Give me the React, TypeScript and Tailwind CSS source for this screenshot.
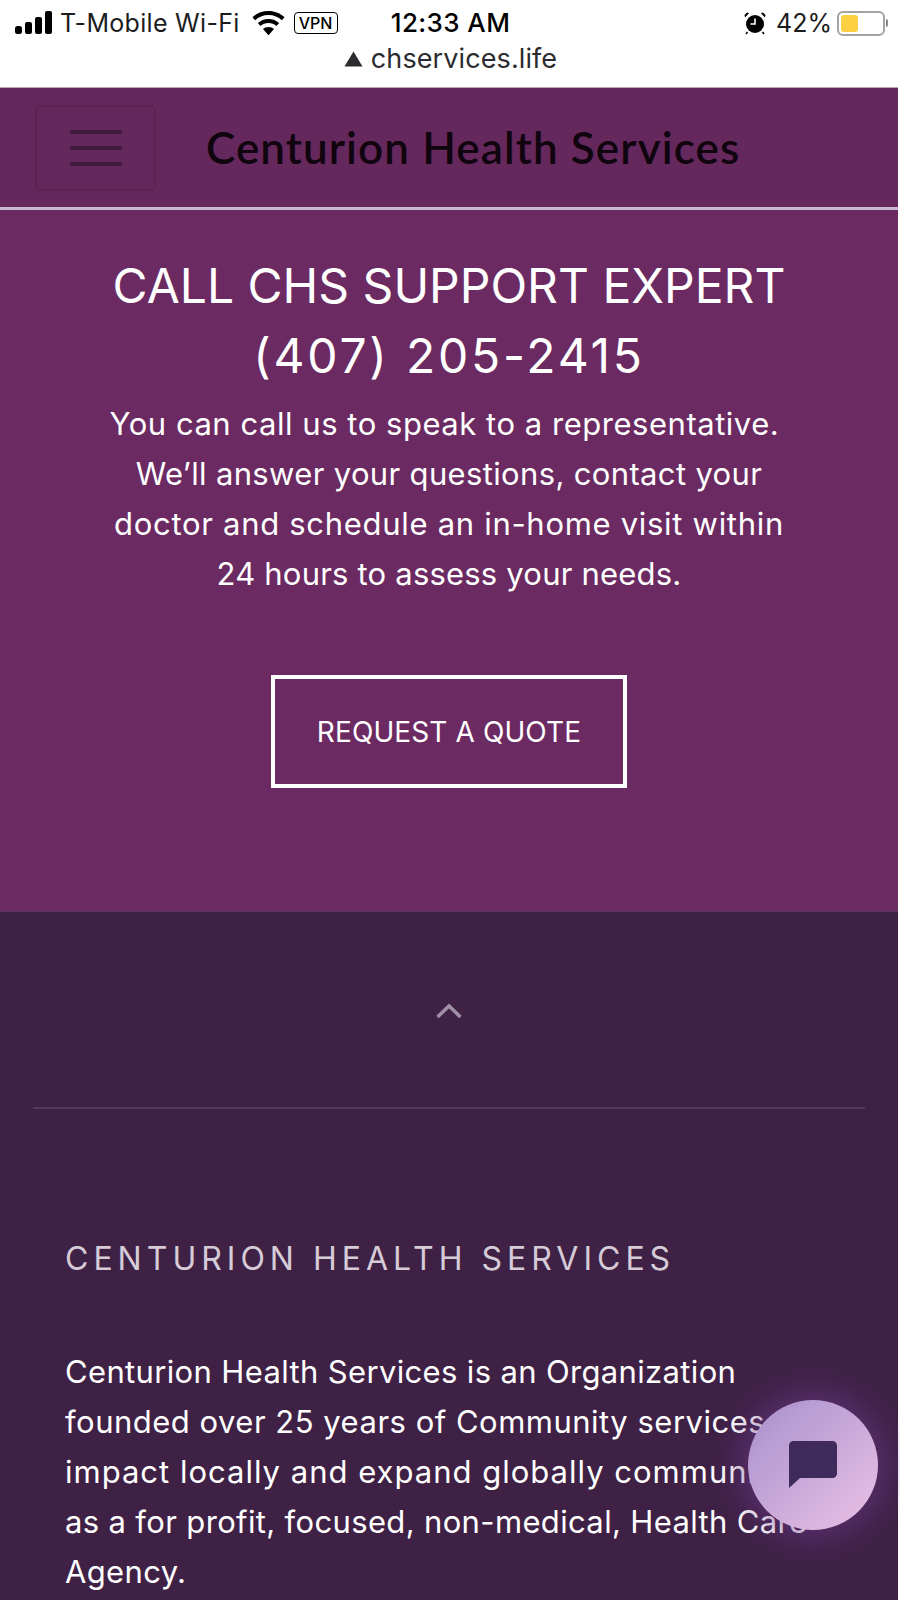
import React from 'react';

const bodyFont = { fontFamily: 'Inter, "Liberation Sans", sans-serif' };

const SignalBars: React.FC = () => (
  <svg width="37" height="24" viewBox="0 0 37 24" className="fill-black">
    <rect x="0" y="15" width="7" height="8" rx="2.5" />
    <rect x="10" y="11" width="7" height="12" rx="2" />
    <rect x="20" y="6" width="7" height="17" rx="2" />
    <rect x="30" y="0" width="7" height="23" rx="2" />
  </svg>
);

const WifiIcon: React.FC = () => (
  <svg width="33" height="25" viewBox="0 0 33 25" className="fill-black">
    <path d="M16.5 0C10 0 4.6 2.4 0.5 6.2l2.6 3C6.6 6 11.2 4 16.5 4s9.9 2 13.4 5.2l2.6-3C28.4 2.4 23 0 16.5 0z" />
    <path d="M16.5 8c-4.2 0-7.9 1.6-10.7 4.1l2.7 3c2.1-1.9 4.9-3 8-3s5.900 1.100 8 3l2.700-3C24.400 9.600 20.700 8 16.500 8z" />
    <path d="M16.500 16c-2.200 0-4.100.8-5.500 2.100l5.500 6.200 5.500-6.200C20.600 16.800 18.700 16 16.500 16z" />
  </svg>
);

const AlarmIcon: React.FC = () => (
  <svg width="22" height="24" viewBox="0 0 22 24">
    <circle cx="11" cy="13" r="9" className="fill-black" />
    <path d="M1 6.500 5 2.200 3 1.500 0.500 4z M21 6.500 17 2.200 19 1.500 21.500 4z" className="fill-black" />
    <path d="M3.500 21 2 23 M18.500 21 20 23" stroke="black" strokeWidth="1.500" />
    <path d="M11 7.500V13H6.500" stroke="white" strokeWidth="1.600" fill="none" />
  </svg>
);

const BatteryIcon: React.FC = () => (
  <div className="flex items-center gap-[1px]">
    <div className="w-[48px] h-[25px] rounded-[6px] border-2 border-[#a3a3a3] p-[2px]">
      <div className="h-full w-[17px] rounded-[3px] bg-[#fbd042]" />
    </div>
    <div className="w-[2px] h-[8px] rounded-r-sm bg-[#8a8a8a]" />
  </div>
);

const StatusBar: React.FC = () => (
  <div className="h-[87px] w-[898px] shrink-0 bg-white pt-[10px] text-black" style={bodyFont}>
    <div className="grid grid-cols-[1fr_auto_1fr] items-center h-[26px] pl-[15px] pr-[9px]">
      <div className="flex items-center">
        <SignalBars />
        <span className="ml-[8px] text-[25px] leading-none tracking-[0.3px] text-[#1c1c1e]">T-Mobile Wi-Fi</span>
        <span className="ml-[12px]"><WifiIcon /></span>
        <span className="ml-[9px] flex h-[22px] w-[44px] items-center justify-center rounded-[4px] border-[1.5px] border-black text-[16px] font-medium leading-none">VPN</span>
      </div>
      <span className="mr-[3px] text-[26px] font-medium leading-none tracking-[0.4px]">12:33 AM</span>
      <div className="flex items-center justify-end">
        <AlarmIcon />
        <span className="ml-[10px] text-[25px] leading-none text-[#1c1c1e]">42%</span>
        <span className="ml-[5px] mr-[1px]"><BatteryIcon /></span>
      </div>
    </div>
    <div className="mt-[9px] flex items-center justify-center gap-[8px] pl-[3px] text-[#2c2c30]">
      <svg width="19" height="16" viewBox="0 0 19 16" className="fill-[#2c2c30]">
        <path d="M9.500 0.500 18.500 15.500H0.500z" />
      </svg>
      <span className="text-[27px] leading-none tracking-[0.1px]">chservices.life</span>
    </div>
  </div>
);

const Navbar: React.FC = () => (
  <div className="flex h-[120px] items-center bg-[#64285c] pl-[35px] border-t border-[#b9a6b6]">
    <div className="flex h-[86px] w-[121px] flex-col items-center justify-center gap-[12px] rounded-[6px] border-2 border-[#5a2353]">
      <span className="h-[4px] w-[52px] rounded-full bg-[#3f1a3c]" />
      <span className="h-[4px] w-[52px] rounded-full bg-[#3f1a3c]" />
      <span className="h-[4px] w-[52px] rounded-full bg-[#3f1a3c]" />
    </div>
    <span className="mb-[2px] ml-[50px] text-[44px] font-semibold leading-none tracking-[1.1px] text-[#10040f]" style={{ fontFamily: 'Lato, sans-serif' }}>
      Centurion Health Services
    </span>
  </div>
);

const Hero: React.FC = () => (
  <section className="flex h-[704px] flex-col items-center border-t-[3px] border-[#c9b8cf] bg-[#6c2a62] pt-[41px] text-white">
    <h1 className="text-center text-[48px] leading-[70px]">
      CALL CHS SUPPORT EXPERT
      <br />
      <span className="tracking-[2.800px]">(407) 205-2415</span>
    </h1>
    <p className="mt-[8px] text-center text-[31px] leading-[50px] tracking-[0.35px]">
      <span className="tracking-[0.53px]">You can call us to speak to a representative.&nbsp;</span>
      <br />
      We’ll answer your questions, contact your
      <br />
      <span className="tracking-[0.7px]">doctor and schedule an in-home visit within</span>
      <br />
      <span className="tracking-[0.2px]">24 hours to assess your needs.</span>
    </p>
    <button className="mt-[76px] flex h-[113px] w-[356px] items-center justify-center border-4 border-white text-[28px] tracking-[0.1px]">
      REQUEST A QUOTE
    </button>
  </section>
);

const Footer: React.FC = () => (
  <footer className="flex-1 border-t border-[#57385a] bg-[#3f2146] text-white">
    <div className="flex h-[195px] items-center justify-center pt-[3px]">
      <svg width="26" height="16" viewBox="0 0 26 16" fill="none" stroke="#a08fa6" strokeWidth="3.500">
        <path d="M1.500 14 13 3l11.500 11" />
      </svg>
    </div>
    <div className="mx-[33px] h-[2px] bg-[#53395a]" />
    <h2 className="ml-[65px] mt-[130px] text-[32px] leading-[40px] tracking-[5px] text-[#d6ccd8]">
      CENTURION HEALTH SERVICES
    </h2>
    <p className="ml-[65px] mt-[68px] text-[31px] leading-[50px] tracking-[0.35px] whitespace-nowrap">
      Centurion Health Services is an Organization
      <br />
      <span className="tracking-[0.5px]">founded over 25 years of Community services to</span>
      <br />
      <span className="tracking-[1px]">impact locally and expand globally communities</span>
      <br />
      as a for profit, focused, non-medical, Health Care
      <br />
      Agency.
    </p>
  </footer>
);

const ChatBubble: React.FC = () => (
  <div className="absolute left-[748px] top-[1400px] flex h-[130px] w-[130px] items-center justify-center rounded-full bg-gradient-to-br from-[#a78fcb] to-[#ecc2e6] shadow-[0_0_32px_8px_rgba(108,58,140,0.6)]">
    <svg width="48" height="48" viewBox="0 0 48 48" className="fill-[#3f2a5c]">
      <path d="M4.500 0h39A4.500 4.500 0 0 1 48 4.500v28a4.500 4.500 0 0 1-4.500 4.500H11L0 47V4.500A4.500 4.500 0 0 1 4.500 0z" />
    </svg>
  </div>
);

export default function App() {
  return (
    <div className="relative flex h-[1600px] w-[900px] flex-col overflow-hidden bg-white pr-[2px]" style={bodyFont}>
      <StatusBar />
      <Navbar />
      <Hero />
      <Footer />
      <ChatBubble />
    </div>
  );
}
